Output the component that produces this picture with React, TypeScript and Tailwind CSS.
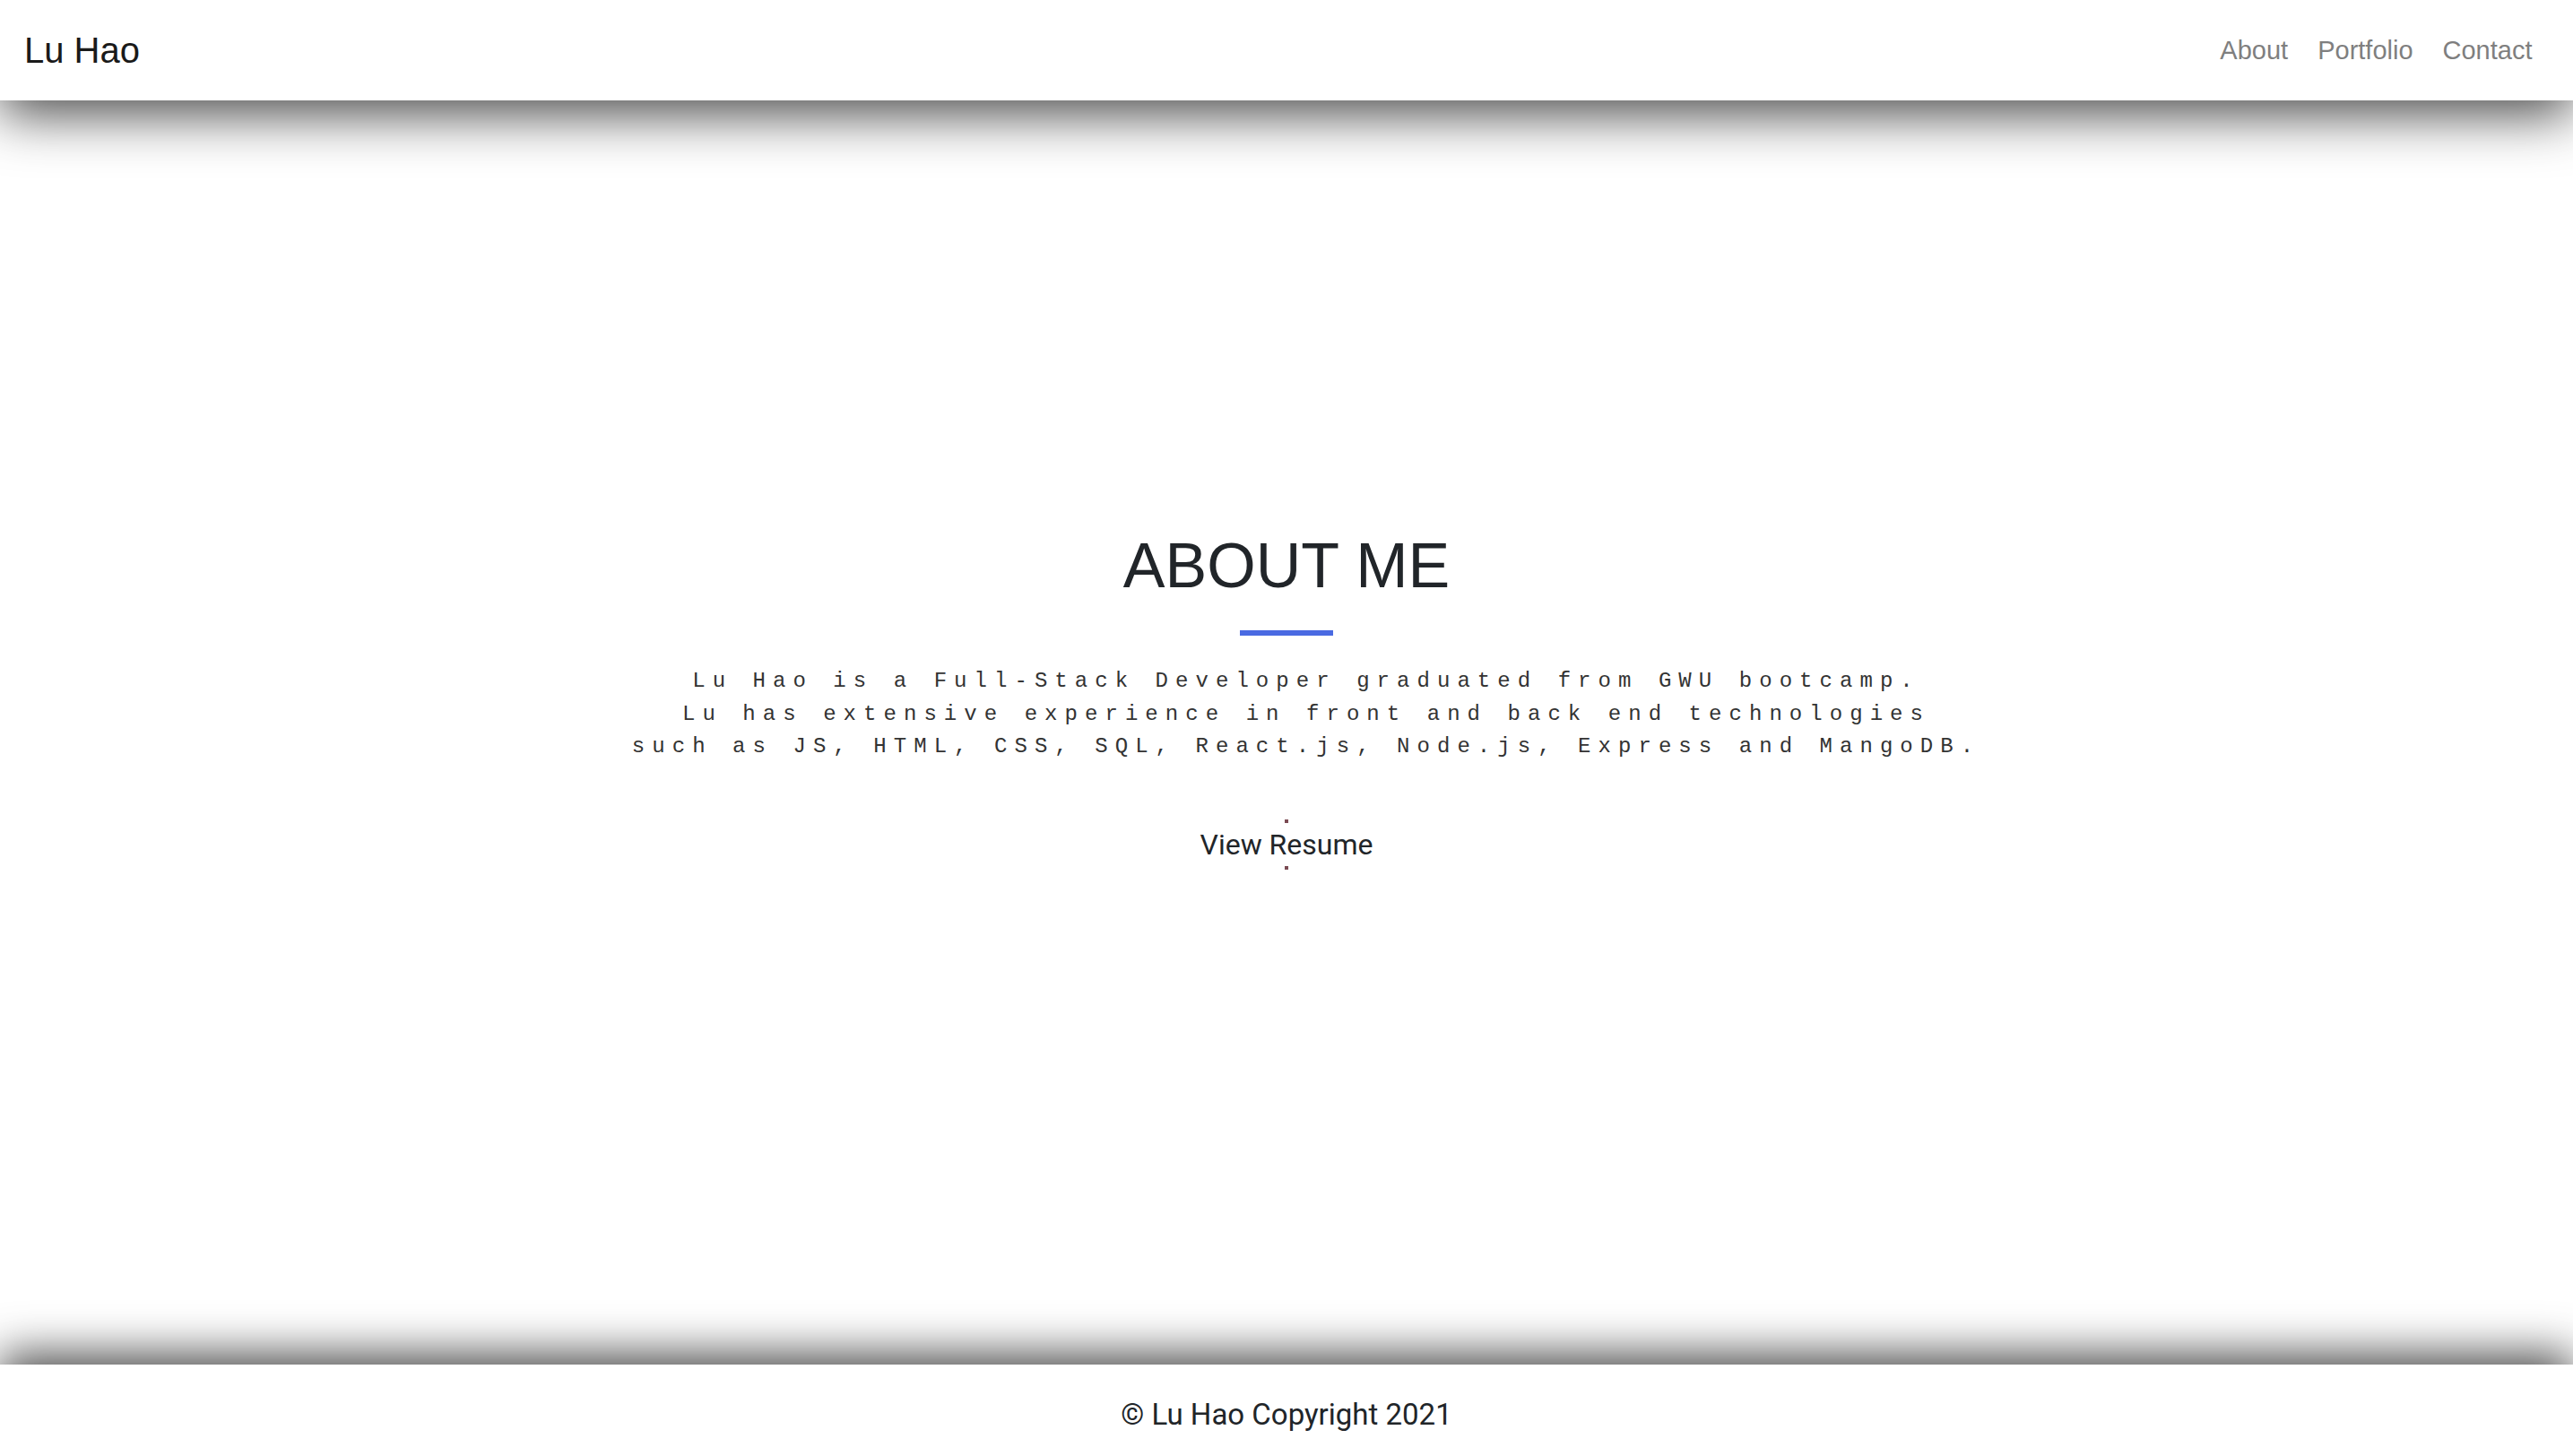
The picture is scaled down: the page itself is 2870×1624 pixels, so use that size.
import React from "react";

const navLinks = ["About", "Portfolio", "Contact"];

const Header = () => {
    return (
        <header className="relative z-10 h-[112px] flex items-center justify-between bg-white pl-[27px] pr-[29px] shadow-[0_15px_60px_rgba(0,0,0,0.72)]">
            <a href="#" className="font-['Liberation_Sans',Arial,sans-serif] text-[40px] leading-none text-[#1a1a1a]">
                Lu Hao
            </a>
            <nav className="flex items-center">
                {navLinks.map((link) => (
                    <a
                        key={link}
                        href="#"
                        className="px-[16.5px] font-['Liberation_Sans',Arial,sans-serif] text-[29px] leading-none text-[#7f7f7f]"
                    >
                        {link}
                    </a>
                ))}
            </nav>
        </header>
    );
};

const About = () => {
    return (
        <main className="flex-1 flex flex-col items-center pt-[477px]">
            <h1 className="font-['Liberation_Sans',Arial,sans-serif] text-[70px] leading-[1.2] text-[#212529]">
                ABOUT ME
            </h1>
            <div className="mt-[30px] w-[104px] h-[6px] bg-[#4a6ae2]"></div>
            <p className="mt-[33px] pl-[44px] text-center font-['Courier_New','Liberation_Mono',monospace] text-[24px] leading-[36.5px] tracking-[8.05px] text-[#333333]">
                Lu Hao is a Full-Stack Developer graduated from GWU bootcamp.
                <br />
                Lu has extensive experience in front and back end technologies
                <br />
                such as JS, HTML, CSS, SQL, React.js, Node.js, Express and MangoDB.
            </p>
            <button className="mt-[62px] flex flex-col items-center bg-transparent">
                <span className="block w-[4px] h-[4px] bg-[#7b4b53]"></span>
                <span className="block font-['Roboto',sans-serif] text-[32px] leading-[48px] text-[#212529]">
                    View Resume
                </span>
                <span className="block w-[4px] h-[4px] bg-[#7b4b53]"></span>
            </button>
        </main>
    );
};

const Footer = () => {
    return (
        <footer className="h-[102px] flex items-center justify-center pt-[8px] bg-white shadow-[0_-12px_50px_rgba(0,0,0,0.7)]">
            <p className="font-['Roboto',sans-serif] text-[33px] leading-none text-[#212529]">
                © Lu Hao Copyright 2021
            </p>
        </footer>
    );
};

const App = () => {
    return (
        <div className="min-h-screen flex flex-col bg-white">
            <Header />
            <About />
            <Footer />
        </div>
    );
};

export default App;
